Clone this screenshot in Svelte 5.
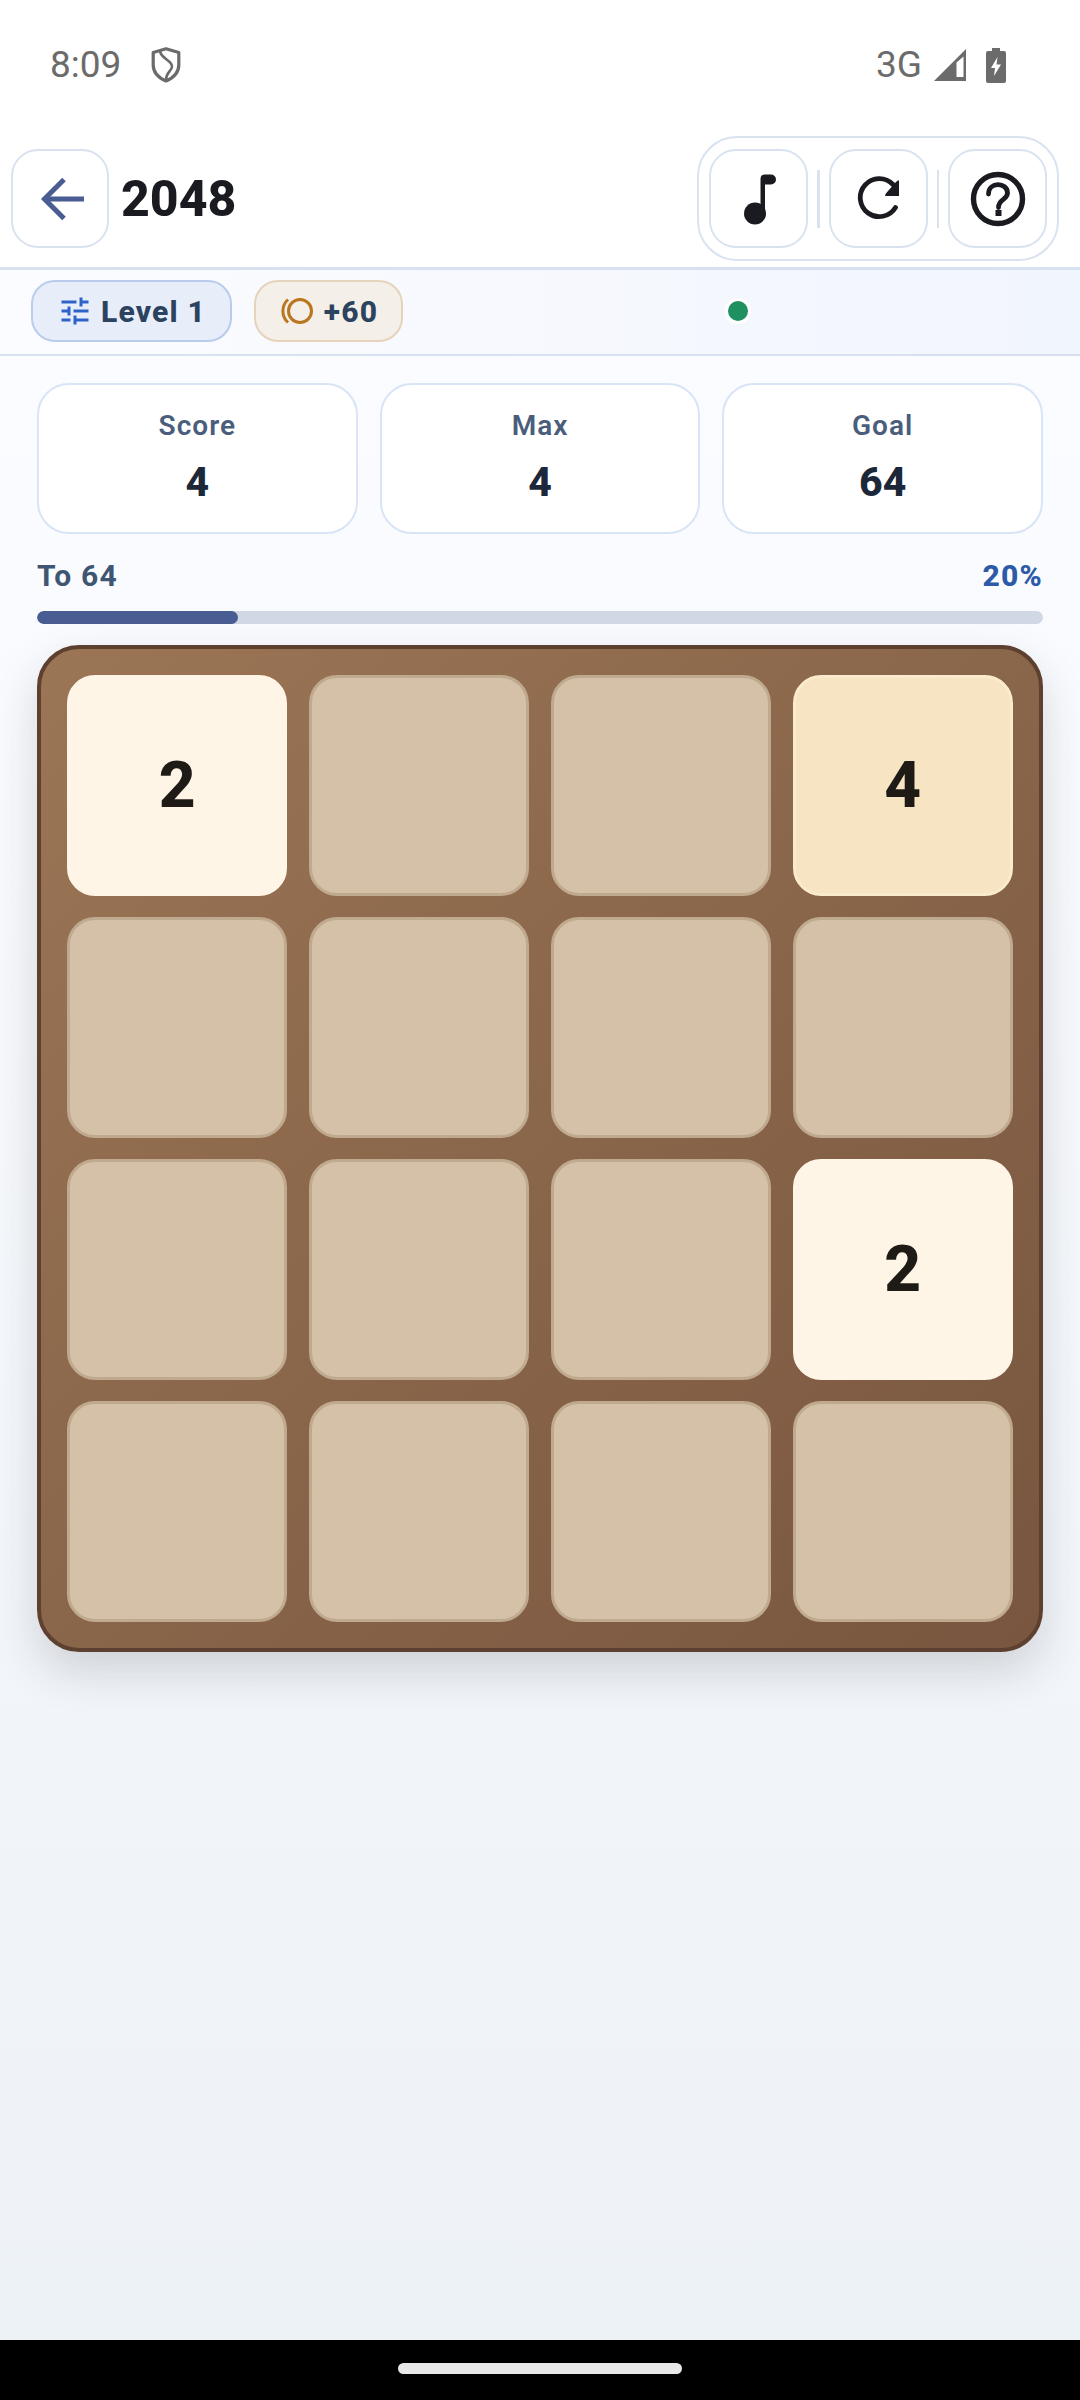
<script>
	const stats = [
		{ label: 'Score', value: 4 },
		{ label: 'Max', value: 4 },
		{ label: 'Goal', value: 64 }
	];

	const board = [2, 0, 0, 4, 0, 0, 0, 0, 0, 0, 0, 2, 0, 0, 0, 0];
	const progress = 20;
</script>

<div class="screen">
	<div class="status">
		<div class="status-left">
			<span class="time">8:09</span>
			<svg width="30" height="36" viewBox="0 0 30 36" fill="none" stroke="#6b6b6b">
				<path d="M15 1.8 L27.8 5.5 V18 C27.8 25.5 22 31 15 34 C8 31 2.2 25.5 2.2 18 V5.5 Z" stroke-width="3.2" stroke-linejoin="round" />
				<path d="M9 4 C10 12 21 13 21 19.5 C21 24 15 25 15 33" stroke-width="2.6" />
			</svg>
		</div>
		<div class="status-right">
			<span class="net">3G</span>
			<svg width="34" height="34" viewBox="0 0 34 34">
				<path d="M33 1 V33 H1 Z" fill="#6b6b6b" />
				<path d="M23.5 14.5 L30.5 8.5 V29 H23.5 Z" fill="#fff" />
			</svg>
			<svg class="battery" width="20" height="35" viewBox="0 0 20 35">
				<path d="M6 0 H14 V3 H18 Q20 3 20 5 V33 Q20 35 18 35 H2 Q0 35 0 33 V5 Q0 3 2 3 H6 Z" fill="#6b6b6b" />
				<path d="M11.5 9 L5 20 H9 L8 28 L15 16.5 H10.5 Z" fill="#fff" />
			</svg>
		</div>
	</div>

	<header class="header">
		<button class="icon-btn" aria-label="Back">
			<svg class="nudge" width="48" height="48" viewBox="0 0 48 48" fill="none" stroke="#4a5d92" stroke-width="5">
				<path d="M45 24 H6" />
				<path d="M25 4.5 L5.5 24 L25 43.5" />
			</svg>
		</button>
		<h1>2048</h1>
		<div class="toolbar">
			<button class="icon-btn" aria-label="Music">
				<svg width="48" height="56" viewBox="0 0 48 56" fill="#1a1b20">
					<circle cx="20" cy="42.5" r="11" />
					<path d="M25.5 42 V8 Q25.5 3.5 30 3.5 H36 A5 5 0 0 1 36 13.5 H30 V42 Z" />
				</svg>
			</button>
			<span class="divider"></span>
			<button class="icon-btn" aria-label="Restart">
				<svg class="nudge" width="48" height="48" viewBox="0 0 48 48" fill="none">
					<path d="M38.5 32.5 A19 19 0 1 1 36 9.5 L38 12" stroke="#1a1b20" stroke-width="4.8" stroke-linecap="round" />
					<path d="M42 6 V21 H28 Q28 19 31 16 L39 7 Q42 4 42 6 Z" fill="#1a1b20" />
				</svg>
			</button>
			<span class="divider"></span>
			<button class="icon-btn" aria-label="Help">
				<svg width="56" height="56" viewBox="0 0 56 56" fill="none" stroke="#1a1b20">
					<circle cx="28" cy="28" r="24.5" stroke-width="5.4" />
					<path d="M18.5 23 C18.5 10.5 37.5 11 37.5 22 C37.5 29 28.5 28 28.5 36.5" stroke-width="4.8" stroke-linecap="round" />
					<rect x="25.5" y="39" width="6" height="6" fill="#1a1b20" stroke="none" />
				</svg>
			</button>
		</div>
	</header>

	<div class="subbar">
		<div class="chip level">
			<svg width="36" height="36" viewBox="0 0 24 24" fill="#2f62c9">
				<path d="M3 17v2h6v-2H3zM3 5v2h10V5H3zm10 16v-2h8v-2h-8v-2h-2v6h2zM7 9v2H3v2h4v2h2V9H7zm14 4v-2H11v2h10zm-6-4h2V7h4V5h-4V3h-2v6z" />
			</svg>
			<span>Level 1</span>
		</div>
		<div class="chip coins">
			<svg width="36" height="28" viewBox="0 0 36 28" fill="none" stroke="#b9761f" stroke-width="3">
				<circle cx="21" cy="14" r="11.5" />
				<path d="M9 2.5 A15.5 15.5 0 0 0 9 25.5" />
			</svg>
			<span>+60</span>
		</div>
		<span class="dot"></span>
	</div>

	<main class="main">
		<section class="stats">
			{#each stats as stat (stat.label)}
				<div class="stat">
					<span class="stat-label">{stat.label}</span>
					<span class="stat-value">{stat.value}</span>
				</div>
			{/each}
		</section>

		<div class="progress-row">
			<span>To 64</span>
			<span class="percent">{progress}%</span>
		</div>
		<div class="track">
			<div class="fill" style="width: {progress}%"></div>
		</div>

		<section class="board">
			{#each board as cell, i (i)}
				<div class="tile" class:t2={cell === 2} class:t4={cell === 4}>
					{#if cell}{cell}{/if}
				</div>
			{/each}
		</section>
	</main>

	<footer class="navbar">
		<span class="pill"></span>
	</footer>
</div>

<style>
	:global(body) {
		margin: 0;
	}

	.screen {
		display: flex;
		flex-direction: column;
		height: 2400px;
		background: #fff;
		font-family: Roboto, 'Liberation Sans', sans-serif;
		color: #1a1b20;
	}

	.status {
		display: flex;
		justify-content: space-between;
		align-items: flex-start;
		height: 130px;
		box-sizing: border-box;
		padding: 47px 74px 0 50px;
		color: #6b6b6b;
	}

	.status-left,
	.status-right {
		display: flex;
		align-items: center;
	}

	.status-left {
		gap: 30px;
	}

	.status-right {
		gap: 11px;
	}

	.time,
	.net {
		font-size: 37px;
		line-height: 36px;
	}

	.battery {
		margin-left: 8px;
	}

	.header {
		display: flex;
		align-items: center;
		height: 137px;
		box-sizing: border-box;
		padding: 0 21px 0 11px;
	}

	h1 {
		margin: 0 0 0 12px;
		flex: 1;
		font-size: 50px;
		font-weight: 800;
		color: #1a1b20;
	}

	.icon-btn {
		display: flex;
		align-items: center;
		justify-content: center;
		width: 98px;
		height: 99px;
		padding: 0;
		box-sizing: border-box;
		background: #fff;
		border: 2.5px solid #d9e3f0;
		border-radius: 27px;
	}

	.toolbar .icon-btn {
		width: 99px;
	}

	/* these two glyphs sit a little right of centre */
	.nudge {
		margin-left: 5px;
	}

	.toolbar {
		display: flex;
		align-items: center;
		gap: 9px;
		height: 125px;
		box-sizing: border-box;
		padding: 0 10px;
		border: 2.5px solid #d9e3f0;
		border-radius: 40px;
	}

	.divider {
		width: 2.5px;
		height: 58px;
		background: #d9e3f0;
	}

	.subbar {
		display: flex;
		align-items: center;
		height: 89px;
		box-sizing: border-box;
		padding: 0 0 2px 31px;
		gap: 22px;
		background: linear-gradient(90deg, #fbfcff, #f1f5fd);
		border-top: 3px solid #d8e1f0;
		border-bottom: 2px solid #d8e1f0;
	}

	.chip {
		display: flex;
		align-items: center;
		justify-content: center;
		height: 62px;
		box-sizing: border-box;
		border-radius: 24px;
		border: 2.5px solid;
		font-size: 30px;
		font-weight: 800;
		color: #2c4360;
		letter-spacing: 1.2px;
	}

	.level {
		width: 201px;
		gap: 8px;
		background: #e7eefa;
		border-color: #b9ccee;
	}

	.coins {
		width: 149px;
		gap: 9px;
		background: #f4efe8;
		border-color: #e6d3bb;
	}

	.dot {
		width: 20px;
		height: 20px;
		margin-left: 303px;
		border-radius: 50%;
		background: #1f9160;
		box-shadow: 0 0 0 3px #fff;
	}

	.main {
		flex: 1;
		box-sizing: border-box;
		padding: 27px 37px 0;
		background: linear-gradient(180deg, #fbfcff, #edf2f7);
	}

	.stats {
		display: grid;
		grid-template-columns: repeat(3, 1fr);
		gap: 22px;
	}

	.stat {
		display: flex;
		flex-direction: column;
		align-items: center;
		height: 151px;
		box-sizing: border-box;
		padding-top: 23px;
		background: #fff;
		border: 2.5px solid #d9e5f6;
		border-radius: 32px;
	}

	.stat-label {
		font-size: 28px;
		line-height: 36px;
		font-weight: 600;
		letter-spacing: 1px;
		color: #4a5e7c;
	}

	.stat-value {
		margin-top: 15px;
		font-size: 41px;
		line-height: 46px;
		font-weight: 800;
		color: #1c2839;
	}

	.progress-row {
		display: flex;
		justify-content: space-between;
		margin-top: 24px;
		font-size: 30px;
		line-height: 36px;
		font-weight: 700;
		letter-spacing: 1.2px;
		color: #3f5574;
	}

	.percent {
		font-weight: 800;
		color: #2c5aa8;
	}

	.track {
		height: 13px;
		margin-top: 17px;
		border-radius: 7px;
		background: #d0d7e5;
		overflow: hidden;
	}

	.fill {
		height: 100%;
		border-radius: 7px;
		background: #4a5d92;
	}

	.board {
		display: grid;
		grid-template-columns: repeat(4, minmax(0, 1fr));
		grid-template-rows: repeat(4, minmax(0, 1fr));
		gap: 21.5px;
		height: 1007px;
		margin-top: 21px;
		box-sizing: border-box;
		padding: 26px;
		background: linear-gradient(135deg, #9b7555, #78563f);
		border: 4px solid #5e4030;
		border-radius: 42px;
		box-shadow: 0 20px 44px rgba(40, 40, 50, 0.17);
	}

	.tile {
		display: flex;
		align-items: center;
		justify-content: center;
		box-sizing: border-box;
		background: #d5c1a7;
		border: 3px solid #bfaa90;
		border-radius: 28px;
		font-size: 64px;
		font-weight: 800;
		color: #1e1a16;
	}

	.t2 {
		background: #fff5e6;
		border-color: #fff5e6;
	}

	.t4 {
		background: #f7e4c2;
		border-color: #fbebcd;
	}

	.navbar {
		display: flex;
		justify-content: center;
		height: 60px;
		background: #000;
	}

	.pill {
		width: 284px;
		height: 11px;
		margin-top: 23px;
		border-radius: 6px;
		background: #e8e8e8;
	}
</style>
